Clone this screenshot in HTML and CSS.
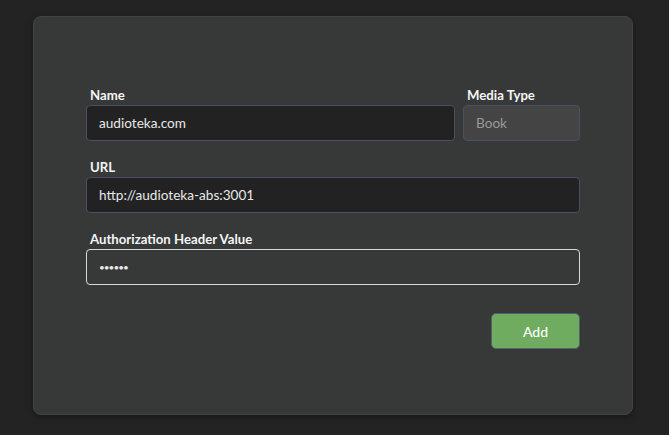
FILE: index.html
```html
<!DOCTYPE html>
<html>
<head>
<meta charset="utf-8">
<link rel="stylesheet" href="styles.css">
</head>
<body>
<div class="card">
  <form class="form">
    <div class="row">
      <div class="field grow">
        <label class="label">Name</label>
        <div class="input">audioteka.com</div>
      </div>
      <div class="field type">
        <label class="label">Media Type</label>
        <div class="input disabled">Book</div>
      </div>
    </div>
    <div class="field">
      <label class="label">URL</label>
      <div class="input">http://audioteka-abs:3001</div>
    </div>
    <div class="field">
      <label class="label">Authorization Header Value</label>
      <div class="input focus">••••••</div>
    </div>
    <div class="actions">
      <button type="button" class="btn">Add</button>
    </div>
  </form>
</div>
</body>
</html>
```
FILE: styles.css
```css
html, body {
  margin: 0;
  padding: 0;
  background: #232323;
  font-family: Lato, "Liberation Sans", sans-serif;
  color: #fff;
}
body {
  padding: 16px 36px 20px 33px;
}
.card {
  width: 600px;
  height: 399px;
  box-sizing: border-box;
  background: #373938;
  border: 1px solid #434544;
  border-radius: 8px;
  box-shadow: 0 2px 6px rgba(0,0,0,0.35);
  padding: 60px 52px 0 52px;
}
.form {
  display: flex;
  flex-direction: column;
}
.row {
  display: flex;
  gap: 8px;
}
.grow { flex: 1; }
.type { width: 117px; }
.field {
  padding: 8px 0;
  display: flex;
  flex-direction: column;
}
.label {
  font-weight: 700;
  font-size: 13.2px;
  line-height: 20px;
  padding-left: 4px;
  color: #f4f4f4;
}
.input {
  height: 36px;
  box-sizing: border-box;
  background: #222222;
  border: 1px solid #4a5060;
  border-radius: 4px;
  padding: 0 12px;
  font-size: 13.6px;
  line-height: 34px;
  color: #e8e8e8;
}
.input.disabled {
  background: #444444;
  color: #9a9a9a;
}
.input.focus {
  background: #373938;
  border-color: #d8d8d8;
  font-size: 10px;
  letter-spacing: -1px;
}
.actions {
  display: flex;
  justify-content: flex-end;
  padding-top: 20px;
}
.btn {
  width: 89px;
  height: 36px;
  background: #6fac5f;
  border: 1px solid #566170;
  border-radius: 5px;
  color: #fff;
  font-family: Lato, "Liberation Sans", sans-serif;
  font-size: 14px;
  font-weight: 500;
}
```
